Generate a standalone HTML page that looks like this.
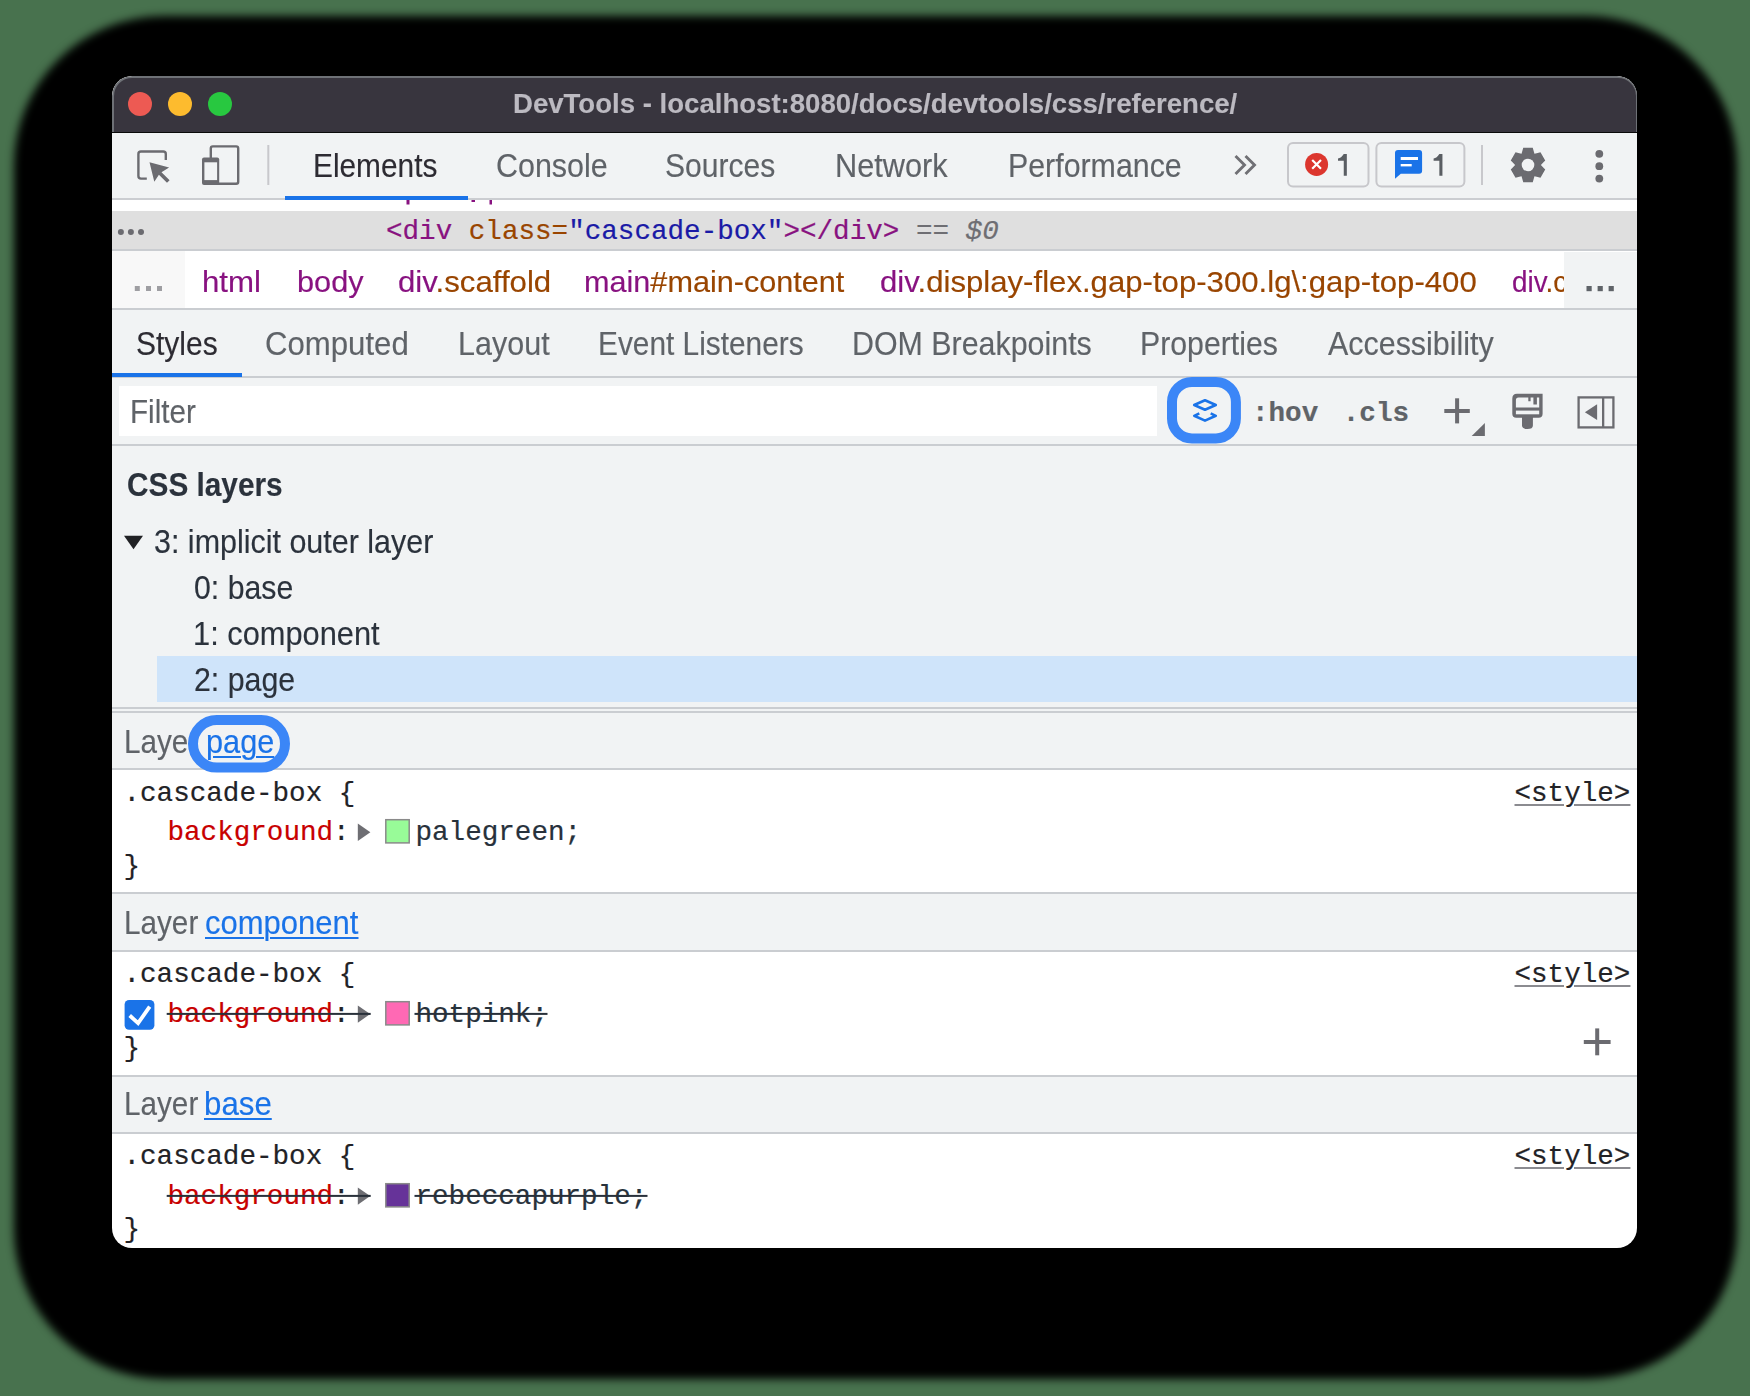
<!DOCTYPE html>
<html><head><meta charset="utf-8">
<style>
html,body{margin:0;padding:0;overflow:hidden;}
body{width:1750px;height:1396px;overflow:hidden;background:rgb(72,114,78);position:relative;font-family:"Liberation Sans",sans-serif;}
#shadow{position:absolute;left:13.6px;top:16.3px;width:1723.2px;height:1362.7px;background:#000;border-radius:150px;filter:blur(4.5px);}
#win{position:absolute;left:112px;top:76px;width:1525px;height:1172px;border-radius:20px;overflow:hidden;background:#fff;}
#in{position:absolute;left:-112px;top:-76px;width:1750px;height:1396px;}
.a{position:absolute;}
.s{position:absolute;font-family:"Liberation Sans",sans-serif;white-space:pre;transform-origin:0 0;-webkit-text-stroke:0.15px currentColor;}
.m{position:absolute;font-family:"Liberation Mono",monospace;white-space:pre;-webkit-text-stroke:0.2px currentColor;}
</style></head>
<body>
<div id="shadow"></div>
<div id="win"><div id="in">
  <!-- title bar -->
  <div class="a" style="left:112px;top:76px;width:1522px;height:54px;background:rgb(56,53,62);border:2px solid #6e7176;border-bottom:none;border-radius:20px 20px 0 0;"></div>
  <div class="a" style="left:112px;top:132px;width:1525px;height:1px;background:#0a0a0a;"></div>
  <div class="a" style="left:128px;top:92px;width:24px;height:24px;border-radius:50%;background:#ed5a53;"></div>
  <div class="a" style="left:168px;top:92px;width:24px;height:24px;border-radius:50%;background:#fdbb2e;"></div>
  <div class="a" style="left:208px;top:92px;width:24px;height:24px;border-radius:50%;background:#28c840;"></div>

  <!-- toolbar -->
  <div class="a" style="left:112px;top:133px;width:1525px;height:65px;background:#f1f3f4;"></div>
  <div class="a" style="left:112px;top:198px;width:1525px;height:2px;background:#cbcdd1;"></div>
  <div class="a" style="left:285px;top:196px;width:183px;height:4px;background:#1a73e8;"></div>

  <!-- DOM tree partial -->
  <div class="a" style="left:112px;top:200px;width:1525px;height:11px;background:#fff;"></div>
  <div class="a" style="left:112px;top:211px;width:1525px;height:38px;background:#dfdfdf;"></div>
  <div class="a" style="left:112px;top:249px;width:1525px;height:2px;background:#cacdd1;"></div>

  <!-- breadcrumbs -->
  <div class="a" style="left:112px;top:251px;width:1525px;height:57px;background:#fff;"></div>
  <div class="a" style="left:112px;top:251px;width:73px;height:57px;background:#f8f8f8;"></div>
  <div class="a" style="left:112px;top:308px;width:1525px;height:2px;background:#cacdd1;"></div>

  <!-- sidebar tabs -->
  <div class="a" style="left:112px;top:310px;width:1525px;height:66px;background:#f1f3f4;"></div>
  <div class="a" style="left:112px;top:376px;width:1525px;height:2px;background:#cacdd1;"></div>
  <div class="a" style="left:112px;top:373px;width:130px;height:4px;background:#1a73e8;"></div>

  <!-- filter bar -->
  <div class="a" style="left:112px;top:378px;width:1525px;height:66px;background:#f1f3f4;"></div>
  <div class="a" style="left:119px;top:386px;width:1038px;height:50px;background:#fff;"></div>
  <div class="a" style="left:112px;top:444px;width:1525px;height:2px;background:#cacdd1;"></div>

  <!-- css layers -->
  <div class="a" style="left:112px;top:446px;width:1525px;height:261px;background:#f1f3f4;"></div>
  <div class="a" style="left:157px;top:656px;width:1480px;height:46px;background:#cfe4fa;"></div>
  <div class="a" style="left:112px;top:707px;width:1525px;height:2px;background:#cacdd1;"></div>
  <div class="a" style="left:112px;top:709px;width:1525px;height:2px;background:#f1f3f4;"></div>
  <div class="a" style="left:112px;top:711px;width:1525px;height:2px;background:#cacdd1;"></div>

  <!-- layer headers -->
  <div class="a" style="left:112px;top:713px;width:1525px;height:55px;background:#f1f3f4;"></div>
  <div class="a" style="left:112px;top:768px;width:1525px;height:2px;background:#cacdd1;"></div>
  <div class="a" style="left:112px;top:892px;width:1525px;height:2px;background:#cacdd1;"></div>
  <div class="a" style="left:112px;top:894px;width:1525px;height:56px;background:#f1f3f4;"></div>
  <div class="a" style="left:112px;top:950px;width:1525px;height:2px;background:#cacdd1;"></div>
  <div class="a" style="left:112px;top:1075px;width:1525px;height:2px;background:#cacdd1;"></div>
  <div class="a" style="left:112px;top:1077px;width:1525px;height:55px;background:#f1f3f4;"></div>
  <div class="a" style="left:112px;top:1132px;width:1525px;height:2px;background:#cacdd1;"></div>

<div class="s" style="left:512.60px;top:90.42px;font-size:27.5px;line-height:27.5px;font-weight:bold;color:#bcbac1;transform:scaleX(1.0026);">DevTools - localhost:8080/docs/devtools/css/reference/</div>
<div class="s" style="left:312.56px;top:149.98px;font-size:32.5px;line-height:32.5px;font-weight:normal;color:#2d2b32;transform:scaleX(0.9180);">Elements</div>
<div class="s" style="left:495.56px;top:149.98px;font-size:32.5px;line-height:32.5px;font-weight:normal;color:#5f6368;transform:scaleX(0.9371);">Console</div>
<div class="s" style="left:665.48px;top:149.98px;font-size:32.5px;line-height:32.5px;font-weight:normal;color:#5f6368;transform:scaleX(0.9248);">Sources</div>
<div class="s" style="left:834.91px;top:149.98px;font-size:32.5px;line-height:32.5px;font-weight:normal;color:#5f6368;transform:scaleX(0.9454);">Network</div>
<div class="s" style="left:1007.73px;top:149.98px;font-size:32.5px;line-height:32.5px;font-weight:normal;color:#5f6368;transform:scaleX(0.9335);">Performance</div>
<div class="s" style="left:201.82px;top:266.60px;font-size:30.0px;line-height:30.0px;font-weight:normal;color:#881280;transform:scaleX(1.0413);">html</div>
<div class="s" style="left:296.68px;top:266.60px;font-size:30.0px;line-height:30.0px;font-weight:normal;color:#881280;transform:scaleX(1.0241);">body</div>
<div class="s" style="left:398.26px;top:266.60px;font-size:30.0px;line-height:30.0px;font-weight:normal;color:#881280;transform:scaleX(1.0400);">div<span style="color:#994500">.scaffold</span></div>
<div class="s" style="left:583.96px;top:266.60px;font-size:30.0px;line-height:30.0px;font-weight:normal;color:#881280;transform:scaleX(1.0205);">main<span style="color:#994500">#main-content</span></div>
<div class="s" style="left:879.96px;top:266.60px;font-size:30.0px;line-height:30.0px;font-weight:normal;color:#881280;transform:scaleX(1.0382);">div<span style="color:#994500">.display-flex.gap-top-300.lg\:gap-top-400</span></div>
<div class="s" style="left:1511.97px;top:266.60px;font-size:30.0px;line-height:30.0px;font-weight:normal;color:#881280;transform:scaleX(0.9300);">div<span style="color:#994500">.cascade-box</span></div>
<div class="s" style="left:135.68px;top:327.98px;font-size:32.5px;line-height:32.5px;font-weight:normal;color:#2d2b32;transform:scaleX(0.9226);">Styles</div>
<div class="s" style="left:265.34px;top:327.98px;font-size:32.5px;line-height:32.5px;font-weight:normal;color:#5f6368;transform:scaleX(0.9587);">Computed</div>
<div class="s" style="left:457.52px;top:327.98px;font-size:32.5px;line-height:32.5px;font-weight:normal;color:#5f6368;transform:scaleX(0.9388);">Layout</div>
<div class="s" style="left:597.66px;top:327.98px;font-size:32.5px;line-height:32.5px;font-weight:normal;color:#5f6368;transform:scaleX(0.9181);">Event Listeners</div>
<div class="s" style="left:851.83px;top:327.98px;font-size:32.5px;line-height:32.5px;font-weight:normal;color:#5f6368;transform:scaleX(0.9350);">DOM Breakpoints</div>
<div class="s" style="left:1139.84px;top:327.98px;font-size:32.5px;line-height:32.5px;font-weight:normal;color:#5f6368;transform:scaleX(0.9309);">Properties</div>
<div class="s" style="left:1328.20px;top:327.98px;font-size:32.5px;line-height:32.5px;font-weight:normal;color:#5f6368;transform:scaleX(0.9362);">Accessibility</div>
<div class="s" style="left:129.78px;top:395.98px;font-size:32.5px;line-height:32.5px;font-weight:normal;color:#5f6368;transform:scaleX(0.9120);">Filter</div>
<div class="s" style="left:126.61px;top:468.30px;font-size:33.3px;line-height:33.3px;font-weight:bold;color:#2b323c;transform:scaleX(0.8946);">CSS layers</div>
<div class="s" style="left:153.96px;top:525.98px;font-size:32.5px;line-height:32.5px;font-weight:normal;color:#2b323c;transform:scaleX(0.9374);">3: implicit outer layer</div>
<div class="s" style="left:194.37px;top:571.98px;font-size:32.5px;line-height:32.5px;font-weight:normal;color:#2b323c;transform:scaleX(0.9308);">0: base</div>
<div class="s" style="left:193.40px;top:617.98px;font-size:32.5px;line-height:32.5px;font-weight:normal;color:#2b323c;transform:scaleX(0.9476);">1: component</div>
<div class="s" style="left:194.37px;top:663.98px;font-size:32.5px;line-height:32.5px;font-weight:normal;color:#2b323c;transform:scaleX(0.9336);">2: page</div>
<div class="s" style="left:124.17px;top:725.98px;font-size:32.5px;line-height:32.5px;font-weight:normal;color:#5f6368;transform:scaleX(0.9135);">Layer</div>
<div class="s" style="left:205.81px;top:725.98px;font-size:32.5px;line-height:32.5px;font-weight:normal;color:#1a73e8;transform:scaleX(0.9447);text-decoration:underline;text-decoration-thickness:2px;text-underline-offset:3px;">page</div>
<div class="s" style="left:124.17px;top:906.98px;font-size:32.5px;line-height:32.5px;font-weight:normal;color:#5f6368;transform:scaleX(0.9135);">Layer</div>
<div class="s" style="left:205.05px;top:906.98px;font-size:32.5px;line-height:32.5px;font-weight:normal;color:#1a73e8;transform:scaleX(0.9545);text-decoration:underline;text-decoration-thickness:2px;text-underline-offset:3px;">component</div>
<div class="s" style="left:124.17px;top:1087.98px;font-size:32.5px;line-height:32.5px;font-weight:normal;color:#5f6368;transform:scaleX(0.9135);">Layer</div>
<div class="s" style="left:204.08px;top:1087.98px;font-size:32.5px;line-height:32.5px;font-weight:normal;color:#1a73e8;transform:scaleX(0.9614);text-decoration:underline;text-decoration-thickness:2px;text-underline-offset:3px;">base</div>
<div class="m" style="left:386.00px;top:217.86px;font-size:27.6px;line-height:27.6px;font-weight:normal;color:#222226;"><span style="color:#881280">&lt;div </span><span style="color:#994500">class=</span><span style="color:#1a1aa6">"cascade-box"</span><span style="color:#881280">&gt;&lt;/div&gt;</span> <span style="color:#6e6e73">==</span> <span style="color:#6e6e73;font-style:italic">$0</span></div>
<div class="m" style="left:123.50px;top:779.86px;font-size:27.6px;line-height:27.6px;font-weight:normal;color:#222226;">.cascade-box {</div>
<div class="m" style="left:123.50px;top:852.86px;font-size:27.6px;line-height:27.6px;font-weight:normal;color:#222226;">}</div>
<div class="m" style="left:167.50px;top:819.36px;font-size:27.6px;line-height:27.6px;font-weight:normal;color:#222226;"><span style="color:#c80000">background</span>:</div>
<div class="m" style="left:415.50px;top:819.36px;font-size:27.6px;line-height:27.6px;font-weight:normal;color:#27313b;">palegreen;</div>
<div class="m" style="left:1514.50px;top:779.86px;font-size:27.6px;line-height:27.6px;font-weight:normal;color:#222226;text-decoration:underline;text-decoration-color:#8b8b90;text-decoration-thickness:2px;text-underline-offset:3px;">&lt;style&gt;</div>
<div class="m" style="left:123.50px;top:961.36px;font-size:27.6px;line-height:27.6px;font-weight:normal;color:#222226;">.cascade-box {</div>
<div class="m" style="left:123.50px;top:1034.86px;font-size:27.6px;line-height:27.6px;font-weight:normal;color:#222226;">}</div>
<div class="m" style="left:167.50px;top:1001.36px;font-size:27.6px;line-height:27.6px;font-weight:normal;color:#222226;"><span style="color:#c80000">background</span>:</div>
<div class="m" style="left:415.50px;top:1001.36px;font-size:27.6px;line-height:27.6px;font-weight:normal;color:#27313b;">hotpink;</div>
<div class="m" style="left:1514.50px;top:961.36px;font-size:27.6px;line-height:27.6px;font-weight:normal;color:#222226;text-decoration:underline;text-decoration-color:#8b8b90;text-decoration-thickness:2px;text-underline-offset:3px;">&lt;style&gt;</div>
<div class="m" style="left:123.50px;top:1143.36px;font-size:27.6px;line-height:27.6px;font-weight:normal;color:#222226;">.cascade-box {</div>
<div class="m" style="left:123.50px;top:1216.36px;font-size:27.6px;line-height:27.6px;font-weight:normal;color:#222226;">}</div>
<div class="m" style="left:167.50px;top:1182.86px;font-size:27.6px;line-height:27.6px;font-weight:normal;color:#222226;"><span style="color:#c80000">background</span>:</div>
<div class="m" style="left:415.50px;top:1182.86px;font-size:27.6px;line-height:27.6px;font-weight:normal;color:#27313b;">rebeccapurple;</div>
<div class="m" style="left:1514.50px;top:1143.36px;font-size:27.6px;line-height:27.6px;font-weight:normal;color:#222226;text-decoration:underline;text-decoration-color:#8b8b90;text-decoration-thickness:2px;text-underline-offset:3px;">&lt;style&gt;</div>
<div class="m" style="left:1252.00px;top:399.86px;font-size:27.6px;line-height:27.6px;font-weight:bold;color:#5f6368;">:hov</div>
<div class="m" style="left:1342.80px;top:399.86px;font-size:27.6px;line-height:27.6px;font-weight:bold;color:#5f6368;">.cls</div>

  <div class="a" style="left:1564px;top:252px;width:73px;height:56px;background:#f1f3f4;"></div>

  <svg class="a" style="left:0;top:0;" width="1750" height="1396" viewBox="0 0 1750 1396">
    <!-- inspect icon -->
    <g fill="none" stroke="#6b6b70" stroke-width="2.4">
      <path d="M146.8 178.6 H141 Q138.4 178.6 138.4 176 V154 Q138.4 151.5 141 151.5 H163.2 Q165.8 151.5 165.8 154 V159.9"/>
      <rect x="210.8" y="146.4" width="27.4" height="37.3" rx="2"/>
    </g>
    <path d="M149.5 162.3 L169.1 167.4 L161.5 172.2 L169.6 180.2 L167 182.8 L158.9 174.8 L154.3 181.8 Z" fill="#6b6b70"/>
    <rect x="202" y="157.5" width="17.2" height="27.4" rx="2" fill="#6b6b70"/>
    <rect x="204.4" y="162.3" width="12.7" height="17.8" fill="#f1f3f4"/>
    <!-- separators -->
    <rect x="267.3" y="145" width="2" height="40" fill="#c8c8cc"/>
    <rect x="1481" y="145" width="2" height="40" fill="#c8c8cc"/>
    <!-- chevrons -->
    <path d="M1235.5 156 L1244.5 165 L1235.5 174 M1245.5 156 L1254.5 165 L1245.5 174" fill="none" stroke="#707075" stroke-width="2.9"/>
    <!-- badges -->
    <rect x="1288" y="143" width="80.5" height="43.5" rx="5" fill="none" stroke="#c7c7cb" stroke-width="2"/>
    <rect x="1376.4" y="143" width="88" height="43.5" rx="5" fill="none" stroke="#c7c7cb" stroke-width="2"/>
    <circle cx="1316.6" cy="164.4" r="11.5" fill="#dc362e"/>
    <path d="M1312.2 160 L1321 168.8 M1321 160 L1312.2 168.8" stroke="#fff" stroke-width="2.2"/>
    <path d="M1398 150 H1419.1 Q1422.1 150 1422.1 153 V170.8 Q1422.1 173.8 1419.1 173.8 H1400.8 L1395 178.8 V153 Q1395 150 1398 150 Z" fill="#1a73e8"/>
    <rect x="1400.7" y="157" width="17.3" height="3" fill="#fff"/>
    <rect x="1400.7" y="164" width="11" height="2.4" fill="#fff"/>
    <path d="M1343.75 154.1 H1346.84 V175.8 H1343.75 V160.8 H1338 V158.4 Q1341.2 158.2 1343.75 154.1 Z" fill="#5a5e63"/>
    <path transform="translate(95.6 0)" d="M1343.75 154.1 H1346.84 V175.8 H1343.75 V160.8 H1338 V158.4 Q1341.2 158.2 1343.75 154.1 Z" fill="#5a5e63"/>
    <!-- gear -->
    <path d="M1522.18 151.61 L1523.24 147.85 L1532.76 147.85 L1533.82 151.61 L1534.45 153.83 L1536.68 153.26 L1540.48 152.30 L1545.23 160.54 L1542.51 163.35 L1540.90 165.00 L1542.51 166.65 L1545.23 169.46 L1540.48 177.70 L1536.68 176.74 L1534.45 176.17 L1533.82 178.39 L1532.76 182.15 L1523.24 182.15 L1522.18 178.39 L1521.55 176.17 L1519.32 176.74 L1515.52 177.70 L1510.77 169.46 L1513.49 166.65 L1515.10 165.00 L1513.49 163.35 L1510.77 160.54 L1515.52 152.30 L1519.32 153.26 L1521.55 153.83 Z" fill="#6b6b70"/>
    <circle cx="1528" cy="165" r="6.3" fill="#f1f3f4"/>
    <circle cx="1599.3" cy="153.8" r="3.9" fill="#6b6b70"/>
    <circle cx="1599.3" cy="166.2" r="3.9" fill="#6b6b70"/>
    <circle cx="1599.3" cy="178.6" r="3.9" fill="#6b6b70"/>
    <!-- selected row dots -->
    <circle cx="120.9" cy="232" r="3" fill="#6b6b70"/>
    <circle cx="130.9" cy="232" r="3" fill="#6b6b70"/>
    <circle cx="141" cy="232" r="3" fill="#6b6b70"/>
    <!-- dom fragments -->
    <rect x="406.5" y="200" width="3" height="4.5" fill="#881280"/>
    <rect x="471.5" y="200" width="3.5" height="2" fill="#881280"/>
    <rect x="489.5" y="200" width="2.5" height="4.5" fill="#881280"/>
    <!-- breadcrumb dots -->
    <rect x="134.8" y="286" width="5" height="5" fill="#9e9ea2"/>
    <rect x="146" y="286" width="5" height="5" fill="#9e9ea2"/>
    <rect x="157" y="286" width="5" height="5" fill="#9e9ea2"/>
    <rect x="1586.5" y="286" width="5.2" height="5.2" fill="#5f6368"/>
    <rect x="1597.6" y="286" width="5.2" height="5.2" fill="#5f6368"/>
    <rect x="1608.6" y="286" width="5.2" height="5.2" fill="#5f6368"/>
    <!-- filter ring -->
    <rect x="1172" y="381.9" width="63.9" height="56.6" rx="20" fill="none" stroke="#3b86f7" stroke-width="10"/>
    <path d="M1194.2 405 L1205 400.3 L1215.8 405 L1205 409.7 Z" fill="none" stroke="#1a73e8" stroke-width="2.6" stroke-linejoin="round"/>
    <path d="M1199.3 413.3 L1194.2 415.8 L1205 420.6 L1215.8 415.8 L1210.7 413.3" fill="none" stroke="#1a73e8" stroke-width="2.6" stroke-linejoin="round"/>
    <!-- plus with corner triangle -->
    <rect x="1444.3" y="409" width="25.5" height="4" fill="#6b6b70"/>
    <rect x="1455.1" y="398.3" width="4" height="25.1" fill="#6b6b70"/>
    <path d="M1471.7 436 L1484.9 436 L1484.9 422.9 Z" fill="#6b6b70"/>
    <!-- brush -->
    <path d="M1517 393.7 H1542.6 V413.7 Q1542.6 417.7 1538.6 417.7 H1532.9 V425.6 Q1532.9 429.1 1527.4 429.1 Q1522 429.1 1522 425.6 V417.7 H1516.3 Q1512.3 417.7 1512.3 413.7 V398.7 Q1512.3 393.7 1517 393.7 Z" fill="#6b6b70"/>
    <path d="M1518.5 397.4 H1528.3 V401.2 H1530.6 V397.4 H1533.4 V404.6 H1536.9 V397.4 H1539.2 V407.4 H1515.9 V400 Q1515.9 397.4 1518.5 397.4 Z" fill="#f1f3f4"/>
    <rect x="1515.9" y="410.6" width="23.3" height="3.7" fill="#f1f3f4"/>
    <!-- sidebar toggle -->
    <rect x="1578.6" y="397.4" width="34.8" height="30" fill="none" stroke="#6b6b70" stroke-width="2.3"/>
    <rect x="1602" y="397" width="2.3" height="31" fill="#6b6b70"/>
    <path d="M1584.9 412.3 L1597.1 404.2 L1597.1 420 Z" fill="#6b6b70"/>
    <!-- layers tree triangle -->
    <path d="M124 535.7 L143 535.7 L133.5 549.3 Z" fill="#202124"/>
    <!-- swatches -->
    <rect x="385.8" y="819.7" width="23.4" height="23.2" fill="#98fb98" stroke="#8a8a8a" stroke-width="1.5"/>
    <rect x="385.8" y="1001.7" width="23.4" height="23.2" fill="#ff69b4" stroke="#8a8a8a" stroke-width="1.5"/>
    <rect x="385.8" y="1183.7" width="23.4" height="23.2" fill="#663399" stroke="#8a8a8a" stroke-width="1.5"/>
    <!-- property triangles -->
    <path d="M357.8 823.6 L370.4 832.2 L357.8 840.9 Z" fill="#6e6e73"/>
    <path d="M357.8 1005.4 L370.2 1014 L357.8 1022.7 Z" fill="#6e6e73"/>
    <path d="M357.8 1187.4 L370.2 1196 L357.8 1204.7 Z" fill="#6e6e73"/>
    <!-- strikethroughs -->
    <rect x="166.7" y="1012.9" width="204" height="2" fill="#28303a"/><rect x="414.5" y="1012.9" width="133" height="2" fill="#28303a"/>
    <rect x="166.7" y="1194.9" width="204" height="2" fill="#28303a"/><rect x="414.5" y="1194.9" width="233" height="2" fill="#28303a"/>
    <!-- checkbox -->
    <rect x="124.6" y="1000" width="29.8" height="29.8" rx="4.5" fill="#1a73e8"/>
    <path d="M129.7 1015.5 L138.1 1023.2 L149.7 1006.6" fill="none" stroke="#fff" stroke-width="3.8"/>
    <!-- plus in rule 2 -->
    <rect x="1583.8" y="1040" width="26.8" height="4" fill="#6b6b70"/>
    <rect x="1595.2" y="1028.4" width="4" height="26.9" fill="#6b6b70"/>
    <!-- page ring -->
    <rect x="193" y="720" width="92" height="47.6" rx="23.8" fill="none" stroke="#3b86f7" stroke-width="10"/>
  </svg>
</div></div>
</body></html>
